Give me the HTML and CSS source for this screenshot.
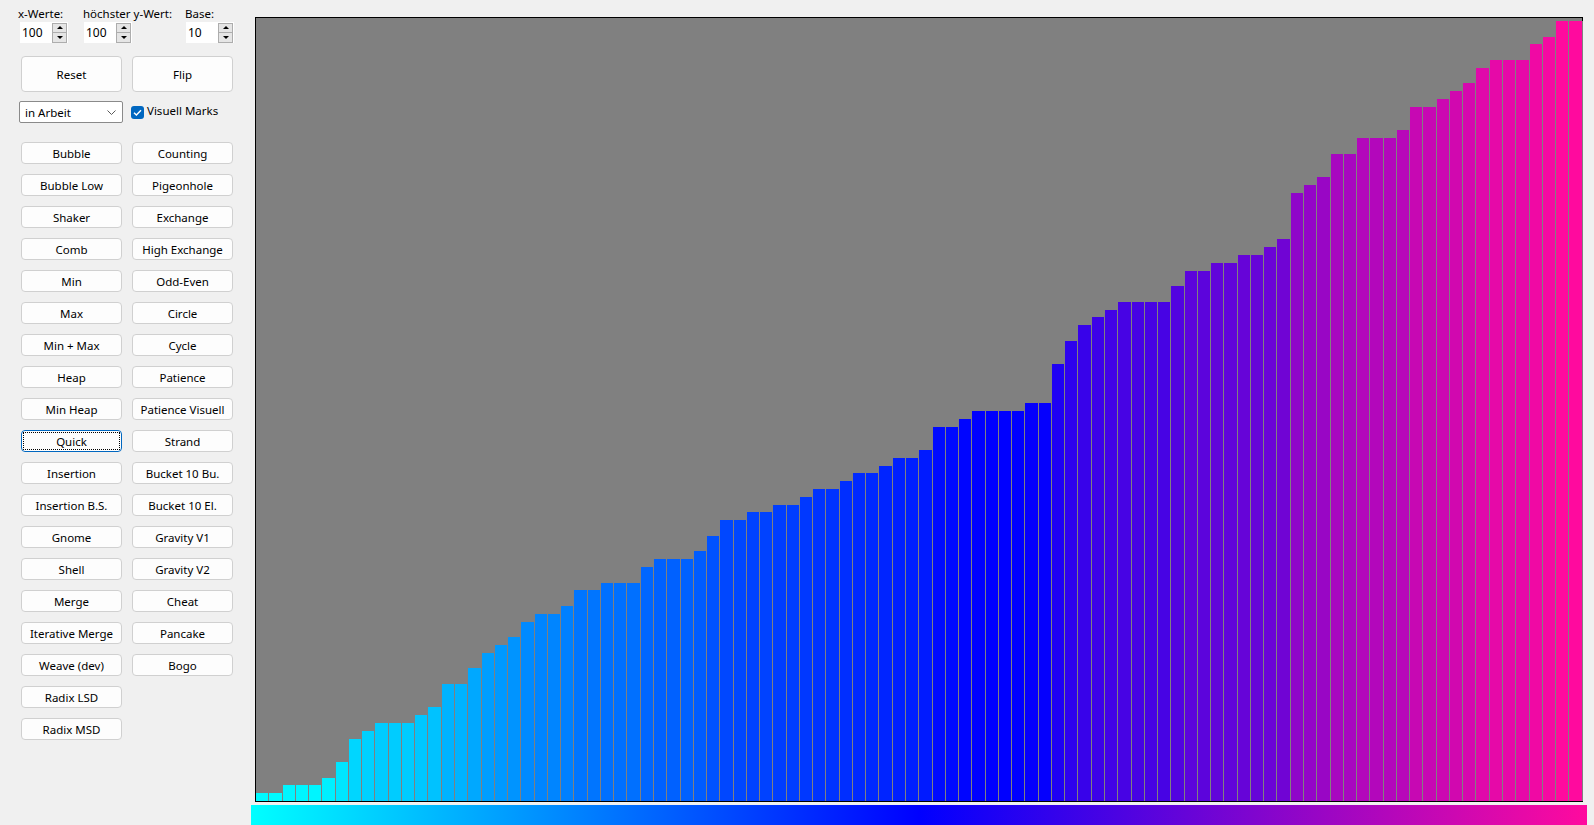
FILE: index.html
```html
<!DOCTYPE html>
<html lang="de">
<head>
<meta charset="utf-8">
<title>Sortier-Visualisierung</title>
<link rel="stylesheet" href="styles.css">
</head>
<body>
<div class="app">
  <aside class="panel">
    <div class="spins">
      <div class="field">
        <span class="lbl">x-Werte:</span>
        <div class="spin first"><span class="num">100</span><span class="arrows"><span class="arr"><svg width="6" height="3" viewBox="0 0 6 3"><path d="M0 3L3 0L6 3Z" fill="#000"/></svg></span><span class="arr"><svg width="6" height="3" viewBox="0 0 6 3"><path d="M0 0L3 3L6 0Z" fill="#000"/></svg></span></span></div>
      </div>
      <div class="field">
        <span class="lbl">höchster y-Wert:</span>
        <div class="spin"><span class="num">100</span><span class="arrows"><span class="arr"><svg width="6" height="3" viewBox="0 0 6 3"><path d="M0 3L3 0L6 3Z" fill="#000"/></svg></span><span class="arr"><svg width="6" height="3" viewBox="0 0 6 3"><path d="M0 0L3 3L6 0Z" fill="#000"/></svg></span></span></div>
      </div>
      <div class="field">
        <span class="lbl">Base:</span>
        <div class="spin"><span class="num">10</span><span class="arrows"><span class="arr"><svg width="6" height="3" viewBox="0 0 6 3"><path d="M0 3L3 0L6 3Z" fill="#000"/></svg></span><span class="arr"><svg width="6" height="3" viewBox="0 0 6 3"><path d="M0 0L3 3L6 0Z" fill="#000"/></svg></span></span></div>
      </div>
    </div>
    <div class="bigrow">
      <button class="btn big">Reset</button>
      <button class="btn big">Flip</button>
    </div>
    <div class="optrow">
      <div class="combo"><span>in Arbeit</span><svg width="9" height="5" viewBox="0 0 9 5"><path d="M0.5 0.5L4.5 4.5L8.5 0.5" fill="none" stroke="#5a5a5a" stroke-width="1"/></svg></div>
      <label class="chk"><span class="box"><svg width="13" height="13" viewBox="0 0 13 13"><path d="M3 6.8L5.4 9.1L10 4.3" fill="none" stroke="#fff" stroke-width="1.4"/></svg></span><span class="chk-text">Visuell Marks</span></label>
    </div>
    <div class="algos">
      <button class="btn">Bubble</button>
      <button class="btn">Bubble Low</button>
      <button class="btn">Shaker</button>
      <button class="btn">Comb</button>
      <button class="btn">Min</button>
      <button class="btn">Max</button>
      <button class="btn">Min + Max</button>
      <button class="btn">Heap</button>
      <button class="btn">Min Heap</button>
      <button class="btn focus">Quick</button>
      <button class="btn">Insertion</button>
      <button class="btn">Insertion B.S.</button>
      <button class="btn">Gnome</button>
      <button class="btn">Shell</button>
      <button class="btn">Merge</button>
      <button class="btn">Iterative Merge</button>
      <button class="btn">Weave (dev)</button>
      <button class="btn">Radix LSD</button>
      <button class="btn">Radix MSD</button>
      <button class="btn">Counting</button>
      <button class="btn">Pigeonhole</button>
      <button class="btn">Exchange</button>
      <button class="btn">High Exchange</button>
      <button class="btn">Odd-Even</button>
      <button class="btn">Circle</button>
      <button class="btn">Cycle</button>
      <button class="btn">Patience</button>
      <button class="btn">Patience Visuell</button>
      <button class="btn">Strand</button>
      <button class="btn">Bucket 10 Bu.</button>
      <button class="btn">Bucket 10 El.</button>
      <button class="btn">Gravity V1</button>
      <button class="btn">Gravity V2</button>
      <button class="btn">Cheat</button>
      <button class="btn">Pancake</button>
      <button class="btn">Bogo</button>
    </div>
  </aside>
  <main class="view">
    <div class="chart">
      <div class="bar" style="--v:1"></div><div class="bar" style="--v:1"></div><div class="bar" style="--v:2"></div><div class="bar" style="--v:2"></div><div class="bar" style="--v:2"></div><div class="bar" style="--v:3"></div><div class="bar" style="--v:5"></div><div class="bar" style="--v:8"></div><div class="bar" style="--v:9"></div><div class="bar" style="--v:10"></div>
      <div class="bar" style="--v:10"></div><div class="bar" style="--v:10"></div><div class="bar" style="--v:11"></div><div class="bar" style="--v:12"></div><div class="bar" style="--v:15"></div><div class="bar" style="--v:15"></div><div class="bar" style="--v:17"></div><div class="bar" style="--v:19"></div><div class="bar" style="--v:20"></div><div class="bar" style="--v:21"></div>
      <div class="bar" style="--v:23"></div><div class="bar" style="--v:24"></div><div class="bar" style="--v:24"></div><div class="bar" style="--v:25"></div><div class="bar" style="--v:27"></div><div class="bar" style="--v:27"></div><div class="bar" style="--v:28"></div><div class="bar" style="--v:28"></div><div class="bar" style="--v:28"></div><div class="bar" style="--v:30"></div>
      <div class="bar" style="--v:31"></div><div class="bar" style="--v:31"></div><div class="bar" style="--v:31"></div><div class="bar" style="--v:32"></div><div class="bar" style="--v:34"></div><div class="bar" style="--v:36"></div><div class="bar" style="--v:36"></div><div class="bar" style="--v:37"></div><div class="bar" style="--v:37"></div><div class="bar" style="--v:38"></div>
      <div class="bar" style="--v:38"></div><div class="bar" style="--v:39"></div><div class="bar" style="--v:40"></div><div class="bar" style="--v:40"></div><div class="bar" style="--v:41"></div><div class="bar" style="--v:42"></div><div class="bar" style="--v:42"></div><div class="bar" style="--v:43"></div><div class="bar" style="--v:44"></div><div class="bar" style="--v:44"></div>
      <div class="bar" style="--v:45"></div><div class="bar" style="--v:48"></div><div class="bar" style="--v:48"></div><div class="bar" style="--v:49"></div><div class="bar" style="--v:50"></div><div class="bar" style="--v:50"></div><div class="bar" style="--v:50"></div><div class="bar" style="--v:50"></div><div class="bar" style="--v:51"></div><div class="bar" style="--v:51"></div>
      <div class="bar" style="--v:56"></div><div class="bar" style="--v:59"></div><div class="bar" style="--v:61"></div><div class="bar" style="--v:62"></div><div class="bar" style="--v:63"></div><div class="bar" style="--v:64"></div><div class="bar" style="--v:64"></div><div class="bar" style="--v:64"></div><div class="bar" style="--v:64"></div><div class="bar" style="--v:66"></div>
      <div class="bar" style="--v:68"></div><div class="bar" style="--v:68"></div><div class="bar" style="--v:69"></div><div class="bar" style="--v:69"></div><div class="bar" style="--v:70"></div><div class="bar" style="--v:70"></div><div class="bar" style="--v:71"></div><div class="bar" style="--v:72"></div><div class="bar" style="--v:78"></div><div class="bar" style="--v:79"></div>
      <div class="bar" style="--v:80"></div><div class="bar" style="--v:83"></div><div class="bar" style="--v:83"></div><div class="bar" style="--v:85"></div><div class="bar" style="--v:85"></div><div class="bar" style="--v:85"></div><div class="bar" style="--v:86"></div><div class="bar" style="--v:89"></div><div class="bar" style="--v:89"></div><div class="bar" style="--v:90"></div>
      <div class="bar" style="--v:91"></div><div class="bar" style="--v:92"></div><div class="bar" style="--v:94"></div><div class="bar" style="--v:95"></div><div class="bar" style="--v:95"></div><div class="bar" style="--v:95"></div><div class="bar" style="--v:97"></div><div class="bar" style="--v:98"></div><div class="bar" style="--v:100"></div><div class="bar" style="--v:100"></div>
    </div>
    <div class="legend"></div>
  </main>
</div>
</body>
</html>
```

FILE: styles.css
```css
html, body {
  margin: 0;
  padding: 0;
}

body {
  background: #f0f0f0;
  font-family: "Noto Sans", "Open Sans", "DejaVu Sans", sans-serif;
  font-size: 11.5px;
  color: #000;
  overflow: hidden;
}

.app {
  display: flex;
  height: 825px;
}

/* ---------- left control panel ---------- */
.panel {
  width: 251px;
  flex: none;
  box-sizing: border-box;
  padding-top: 6px;
}

.spins {
  display: grid;
  grid-template-columns: 65px 102px 66px;
  padding-left: 18px;
}

.lbl {
  display: block;
  height: 16px;
  line-height: 15px;
  white-space: nowrap;
}

.spin {
  width: 48px;
  height: 21px;
  margin-left: 1px;
  background: #fff;
  display: flex;
  align-items: center;
  box-sizing: border-box;
}

.spin.first {
  margin-left: 2px;
}

.num {
  flex: 1;
  padding-left: 2px;
  line-height: 19px;
  font-size: 12px;
}

.arrows {
  width: 15px;
  height: 20px;
  margin-right: 1px;
  display: flex;
  flex-direction: column;
}

.arr {
  height: 10px;
  box-sizing: border-box;
  border: 1px solid #adadad;
  background: #e5e5e5;
  display: flex;
  align-items: center;
  justify-content: center;
}

.arr + .arr {
  border-top: none;
}

.arr svg {
  display: block;
}

.btn {
  width: 101px;
  height: 22px;
  padding: 1px 0 0 0;
  box-sizing: border-box;
  background: #fdfdfd;
  border: 1px solid #d0d0d0;
  border-radius: 4px;
  font: inherit;
  color: #000;
  line-height: 18px;
  white-space: nowrap;
  position: relative;
}

.btn.big {
  height: 36px;
}

.btn.focus {
  border-color: #0067c0;
}

.btn.focus::after {
  content: "";
  position: absolute;
  left: 1px;
  top: 1px;
  right: 1px;
  bottom: 1px;
  border: 1px dotted #000;
}

.bigrow {
  display: flex;
  gap: 10px;
  margin-top: 13px;
  padding-left: 21px;
}

.optrow {
  display: flex;
  align-items: center;
  margin-top: 9px;
  padding-left: 19px;
  height: 22px;
}

.combo {
  width: 104px;
  height: 22px;
  box-sizing: border-box;
  border: 1px solid #8a8a8a;
  border-radius: 2px;
  background: #fff;
  display: flex;
  align-items: center;
  justify-content: space-between;
  padding: 0 6px 0 5px;
}

.combo svg {
  display: block;
  margin-top: 1px;
}

.chk {
  display: flex;
  align-items: center;
  margin-left: 8px;
  white-space: nowrap;
}

.box {
  width: 13px;
  height: 13px;
  border-radius: 3px;
  background: #0067c0;
  margin-right: 3px;
  display: block;
}

.box svg {
  display: block;
}

.chk-text {
  margin-bottom: 3px;
}

.algos {
  display: grid;
  grid-template-columns: 101px 101px;
  grid-template-rows: repeat(19, 22px);
  grid-auto-flow: column;
  column-gap: 10px;
  row-gap: 10px;
  margin-top: 19px;
  padding-left: 21px;
}

/* ---------- chart ---------- */
.view {
  flex: none;
  padding-top: 17px;
  display: flex;
  flex-direction: column;
}

.chart {
  margin-left: 4px;
  width: 1328px;
  height: 785px;
  box-sizing: border-box;
  border: 1px solid #000;
  background: #808080;
  display: flex;
  align-items: flex-end;
}

.bar {
  flex: 1 1 0;
  min-width: 0;
  box-sizing: border-box;
  height: calc(var(--v) * 7.8px);
  border-right: 1px solid #808080;
  background: rgb(
    max(0, (var(--v) - 50) * 5.1),
    calc(max(0, 255 - var(--v) * 5.1) + max(0, (var(--v) - 50) * 0.2)),
    calc(255 - max(0, (var(--v) - 50) * 1.94))
  );
}

.legend {
  margin-top: 3px;
  width: 1336px;
  height: 20px;
  background: linear-gradient(to right, #00ffff 0%, #0000ff 50%, #ff0a9e 100%);
}
```
